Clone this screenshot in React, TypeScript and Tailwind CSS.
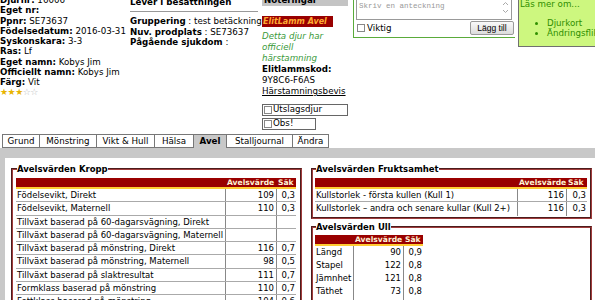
import React from "react";

const Check = () => (
  <span className="inline-block w-[8px] h-[8px] border border-[#888] bg-white shrink-0" />
);

const kropp: [string, string, string][] = [
  ["Födelsevikt, Direkt", "109", "0,3"],
  ["Födelsevikt, Maternell", "110", "0,3"],
  ["Tillväxt baserad på 60-dagarsvägning, Direkt", "", ""],
  ["Tillväxt baserad på 60-dagarsvägning, Maternell", "", ""],
  ["Tillväxt baserad på mönstring, Direkt", "116", "0,7"],
  ["Tillväxt baserad på mönstring, Maternell", "98", "0,5"],
  ["Tillväxt baserad på slaktresultat", "111", "0,7"],
  ["Formklass baserad på mönstring", "110", "0,7"],
  ["Fettklass baserad på mönstring", "104", "0,6"],
];

const frukt: [string, string, string][] = [
  ["Kullstorlek - första kullen (Kull 1)", "116", "0,3"],
  ["Kullstorlek – andra och senare kullar (Kull 2+)", "116", "0,3"],
];

const ull: [string, string, string][] = [
  ["Längd", "90", "0,9"],
  ["Stapel", "122", "0,8"],
  ["Jämnhet", "121", "0,8"],
  ["Täthet", "73", "0,8"],
  ["Glans", "95", "0,8"],
];

const headCls =
  "flex h-[11px] bg-[#990000] border-b-2 border-[#ffcc33] text-[#fff3d6] font-bold text-[7.6px] leading-[9px] whitespace-nowrap";

export default function App() {
  return (
    <div className="w-[595px] h-[300px] overflow-hidden bg-white font-['DejaVu_Sans',sans-serif] text-[8.7px] text-black relative">
      <div className="-mt-[5px]">
        {/* top section */}
        <div className="flex items-start h-[139px]">
          {/* col 1 */}
          <div className="w-[130px] shrink-0 leading-[10.25px] whitespace-nowrap">
            <div><b>Djurnr:</b> 16006</div>
            <div><b>Eget nr:</b></div>
            <div><b>Ppnr:</b> SE73637</div>
            <div><b>Födelsedatum:</b> 2016-03-31</div>
            <div><b>Syskonskara:</b> 3-3</div>
            <div><b>Ras:</b> Lf</div>
            <div><b>Eget namn:</b> Kobys Jim</div>
            <div><b>Officiellt namn:</b> Kobys Jim</div>
            <div><b>Färg:</b> Vit</div>
            <div className="text-[9px] leading-[10px] tracking-[-0.5px]">
              <span className="text-[#e8b400]">★★★</span>
              <span className="text-[#b8b8b8]">☆☆</span>
            </div>
          </div>
          {/* col 2 */}
          <div className="w-[128px] shrink-0 whitespace-nowrap">
            <div className="font-bold pt-[2px] leading-[10px] pb-[4px] border-b border-[#999]">Lever i besättningen</div>
            <div className="mt-[4px] leading-[10.5px]">
              <div><b>Gruppering</b> : test betäckning</div>
              <div><b>Nuv. prodplats</b> : SE73637</div>
              <div><b>Pågående sjukdom</b> :</div>
            </div>
          </div>
          {/* col 3 */}
          <div className="ml-[4px] w-[88px] shrink-0 whitespace-nowrap">
            <div className="h-[11px] bg-[#c4c4c4] font-bold leading-[11px] px-[2px] w-[86px]">Noteringar</div>
            <div className="mt-[10px] w-[71px] h-[11px] bg-[#990000] text-[#ffaa33] italic font-bold text-[8px] leading-[11px] px-[1px] overflow-hidden">ElitLamm Avel</div>
            <div className="mt-[4px] leading-[11px] text-[#3a9a3a] italic">
              <div>Detta djur har</div>
              <div>officiell</div>
              <div>härstamning</div>
            </div>
            <div className="leading-[11px]">
              <div className="font-bold">Elitlammskod:</div>
              <div>9Y8C6-F6AS</div>
              <div className="underline">Härstamningsbevis</div>
            </div>
            <div className="mt-[7px] w-[86px] h-[12px] border border-[#666] flex items-center gap-[1px] pl-[1px]">
              <Check />
              <span>Utslagsdjur</span>
            </div>
            <div className="mt-[2px] w-[54px] h-[12px] border border-[#666] flex items-center gap-[1px] pl-[1px]">
              <Check />
              <span>Obs!</span>
            </div>
          </div>
          {/* col 4 */}
          <div className="ml-[3px] w-[162px] shrink-0 h-[43px] border-l border-b border-[#5aab3a] relative">
            <div className="absolute left-[2px] top-[0px] w-[156px] h-[25px] border border-[#999] bg-white font-['Liberation_Mono',monospace] text-[7.5px] text-[#999] leading-[9px] pl-[2px] pt-[6px]">
              Skriv en anteckning
              <svg className="absolute right-[2px] top-[5px]" width="7" height="13" viewBox="0 0 7 13">
                <path d="M1 4 L3.5 1.5 L6 4" fill="none" stroke="#aaa" strokeWidth="1" />
                <path d="M1 9 L3.5 11.5 L6 9" fill="none" stroke="#aaa" strokeWidth="1" />
              </svg>
            </div>
            <div className="absolute left-[3px] top-[28px] flex items-center gap-[2px] leading-[10px]">
              <Check />
              <span>Viktig</span>
            </div>
            <div className="absolute right-[1px] top-[26px] w-[44px] h-[14px] border border-[#999] rounded-[2px] bg-gradient-to-b from-[#fafafa] to-[#dcdcdc] font-['Liberation_Sans',sans-serif] text-[8.5px] leading-[12px] text-center">
              Lägg till
            </div>
          </div>
          {/* col 5 */}
          <div className="ml-[3px] flex-1 min-w-0 overflow-hidden h-[52px] bg-[#cdf77f] border-l border-b border-[#707070] text-[#2f8f00] whitespace-nowrap leading-[10px] pl-[1px]">
            <div className="pt-[4px]">Läs mer om...</div>
            <ul className="mt-[9px] pl-[27px] list-disc">
              <li>Djurkort</li>
              <li>Ändringsflikar</li>
            </ul>
          </div>
        </div>

        {/* tabs */}
        <div className="flex h-[14px] pl-[2px] leading-[13px] whitespace-nowrap">
          {[
            ["Grund", 37],
            ["Mönstring", 57],
            ["Vikt & Hull", 58],
            ["Hälsa", 39],
            ["Avel", 33],
            ["Stalljournal", 66],
            ["Ändra", 37],
          ].map(([t, w]) => (
            <div
              key={t as string}
              style={{ width: w as number }}
              className={
                "text-center border-t border-l border-[#777] last:border-r " +
                (t === "Avel" ? "bg-[#c8c8c8] font-bold" : "bg-white border-b")
              }
            >
              {t}
            </div>
          ))}
        </div>

        {/* content */}
        <div className="bg-[#c8c8c8] pt-[10px] pl-[5px]">
          <div className="bg-white h-[200px] pl-[6px] pt-[6px] flex items-start gap-[9px] text-[8.5px]">
            {/* Kropp */}
            <fieldset className="w-[291px] shrink-0 border-2 [border-style:groove] border-[#a03c3c] pl-[3px] pr-[2px] pb-[4px]">
              <legend className="font-bold leading-[10px] ml-[1px]">Avelsvärden Kropp</legend>
              <div className="mt-[4px] w-[280px]">
                <div className={headCls}>
                  <div className="w-[210px]" />
                  <div className="w-[51px] pl-[1px]">Avelsvärde</div>
                  <div className="w-[19px] pl-[1px]">Säk</div>
                </div>
                {kropp.map(([n, v, s]) => (
                  <div key={n} className="flex h-[13.3px] leading-[12px] border-b border-[#aaa] whitespace-nowrap">
                    <div className="w-[210px] px-[1px] border-r border-[#888] overflow-hidden">{n}</div>
                    <div className="w-[51px] px-[2px] text-right border-r border-[#888]">{v}</div>
                    <div className="w-[19px] px-[1px] text-right">{s}</div>
                  </div>
                ))}
              </div>
            </fieldset>
            {/* right column */}
            <div className="flex flex-col gap-[3px]">
              <fieldset className="w-[281px] border-2 [border-style:groove] border-[#a03c3c] pl-[2px] pr-[2px] pb-[1px]">
                <legend className="font-bold leading-[10px] ml-[1px]">Avelsvärden Fruktsamhet</legend>
                <div className="mt-[4px] w-[272px]">
                  <div className={headCls}>
                    <div className="w-[203px]" />
                    <div className="w-[49px] pl-[1px]">Avelsvärde</div>
                    <div className="w-[20px] pl-[1px]">Säk</div>
                  </div>
                  {frukt.map(([n, v, s], i) => (
                    <div key={n} className={"flex h-[13.3px] leading-[12px] whitespace-nowrap " + (i === 0 ? "border-b border-[#aaa]" : "")}>
                      <div className="w-[203px] px-[1px] border-r border-[#888] overflow-hidden">{n}</div>
                      <div className="w-[49px] px-[2px] text-right border-r border-[#888]">{v}</div>
                      <div className="w-[20px] px-[1px] text-right">{s}</div>
                    </div>
                  ))}
                </div>
              </fieldset>
              <fieldset className="w-[281px] h-[100px] border-2 [border-style:groove] border-[#a03c3c] pl-[2px] pr-[2px]">
                <legend className="font-bold leading-[10px] ml-[1px]">Avelsvärden Ull</legend>
                <div className="mt-[3px] w-[108px]">
                  <div className={headCls}>
                    <div className="w-[39px]" />
                    <div className="w-[50px] pl-[1px]">Avelsvärde</div>
                    <div className="w-[19px] pl-[1px]">Säk</div>
                  </div>
                  {ull.map(([n, v, s]) => (
                    <div key={n} className="flex h-[13px] leading-[13px] whitespace-nowrap">
                      <div className="w-[39px] px-[1px] border-r border-[#888]">{n}</div>
                      <div className="w-[50px] px-[2px] text-right border-r border-[#888]">{v}</div>
                      <div className="w-[19px] px-[1px] text-right">{s}</div>
                    </div>
                  ))}
                </div>
              </fieldset>
            </div>
          </div>
        </div>
      </div>
    </div>
  );
}
